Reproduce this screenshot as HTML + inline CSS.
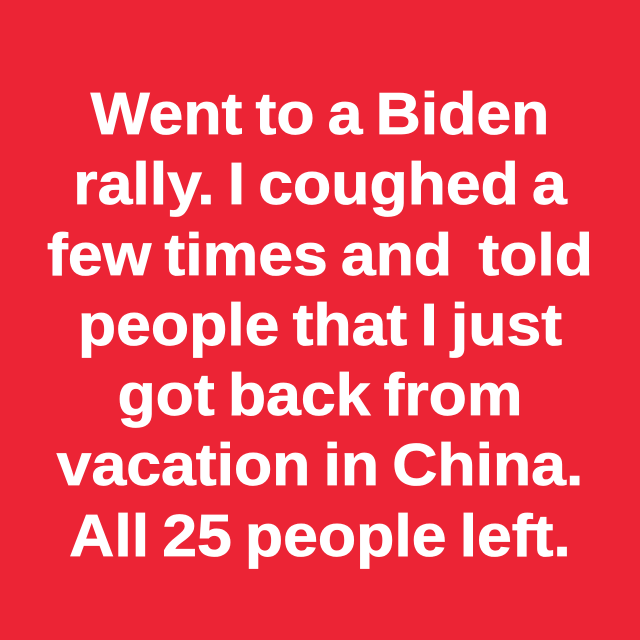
<!DOCTYPE html>
<html><head><style>
html,body{margin:0;padding:0;}
body{width:640px;height:640px;background:#ec2435;overflow:hidden;position:relative;}
.t{position:absolute;left:0;top:79px;width:640px;text-align:center;color:#fff;font-family:"Liberation Sans",Arial,sans-serif;font-weight:bold;font-size:59px;line-height:70.3px;letter-spacing:0px;word-spacing:-4px;white-space:pre;transform:scaleX(1.06);transform-origin:320px 0;-webkit-text-stroke:0.8px #fff;}
</style></head><body>
<div class="t">Went to a Biden
rally. I coughed a
few times and  told
people that I just
got back from
vacation in China.
All 25 people left.</div>
</body></html>
